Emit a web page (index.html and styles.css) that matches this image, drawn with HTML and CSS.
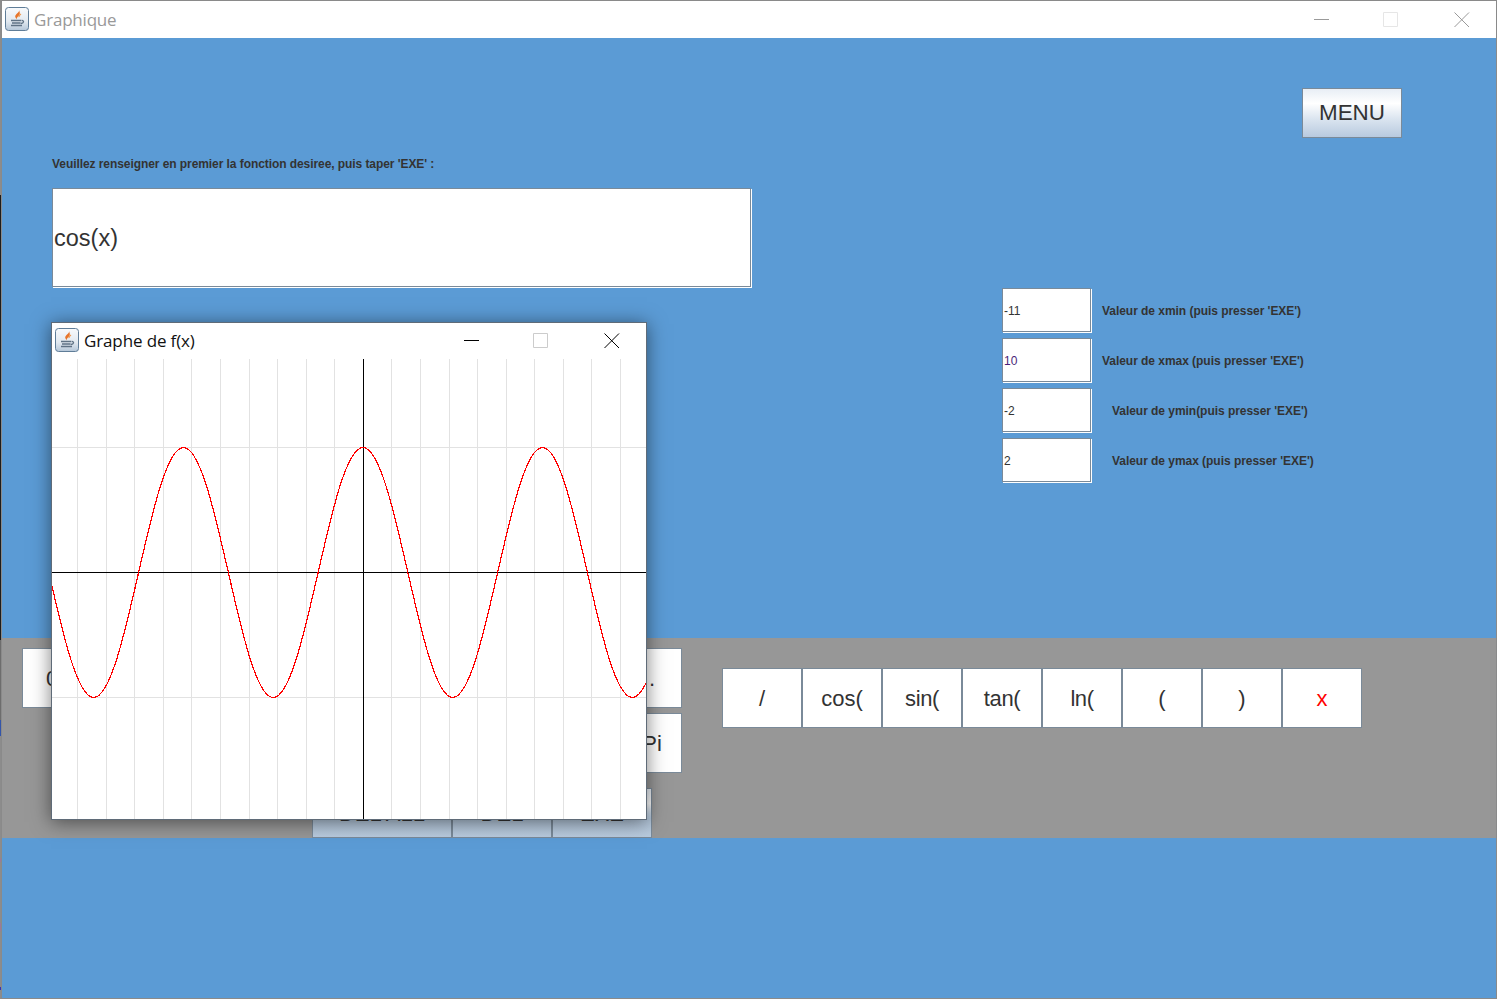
FILE: index.html
```html
<!DOCTYPE html>
<html lang="fr">
<head>
<meta charset="utf-8">
<title>Graphique</title>
<link rel="stylesheet" href="styles.css">
</head>
<body>
<div class="frame">
  <header class="titlebar">
    <svg class="java-icon" viewBox="0 0 24 24"><defs><linearGradient id="g1" x1="0" y1="0" x2="0" y2="1"><stop offset="0" stop-color="#f8fafc"/><stop offset=".6" stop-color="#e2e9f0"/><stop offset="1" stop-color="#b4c6d8"/></linearGradient></defs><rect x=".5" y=".5" width="23" height="23" rx="3" fill="url(#g1)" stroke="#5f7d98"/><path d="M14 3c.8 2.500-4 4.200-3.800 6.600.1 1 1 1.800 1.500 2.900.1-1.700.6-2.500 1.900-3.500 1.300-1 1.800-2.800.4-6z" fill="#e8742a"/><path d="M16 7c-1.500 1-2.300 1.800-2 3.200" fill="none" stroke="#ef9c55" stroke-width="1.200"/><path d="M6 13.500h10.500M7 16h8.500M6 18.500h11M17 13.500c2.200 0 2.200 2.500-1.200 3" fill="none" stroke="#5f7285" stroke-width="1.300"/></svg>
    <span class="title-text muted">Graphique</span>
    <div class="controls">
      <svg class="ctl" viewBox="0 0 16 16"><path d="M0 7.500H15" stroke="#9a9a9a"/></svg>
      <svg class="ctl" viewBox="0 0 16 16"><path d="M.5 .5H14.500V14.500H.5Z" fill="none" stroke="#e6e6e6"/></svg>
      <svg class="ctl ctl-close" viewBox="0 0 16 16"><path d="M.5 .5L15 15M15 .5L.5 15" stroke="#999" fill="none"/></svg>
    </div>
  </header>

  <section class="panel-top">
    <div class="col-left">
      <p class="label top-label">Veuillez renseigner en premier la fonction desiree, puis taper 'EXE' :</p>
      <div class="field big-field">cos(x)</div>
    </div>
    <div class="col-right">
      <button class="btn menu gloss">MENU</button>
      <div class="params">
        <div class="param"><div class="field small-field">-11</div><span class="label gap10">Valeur de xmin (puis presser 'EXE')</span></div>
        <div class="param"><div class="field small-field purple">10</div><span class="label gap10">Valeur de xmax (puis presser 'EXE')</span></div>
        <div class="param"><div class="field small-field">-2</div><span class="label gap20">Valeur de ymin(puis presser 'EXE')</span></div>
        <div class="param"><div class="field small-field">2</div><span class="label gap20">Valeur de ymax (puis presser 'EXE')</span></div>
      </div>
    </div>
  </section>

  <section class="panel-mid">
    <div class="keys-left">
      <div class="row digits">
        <button class="btn key">0</button><button class="btn key">1</button><button class="btn key">2</button><button class="btn key">3</button><button class="btn key">4</button><button class="btn key">5</button><button class="btn key">6</button><button class="btn key">7</button><button class="btn key">8</button><button class="btn key">9</button><button class="btn key">.</button>
      </div>
      <div class="row row-pi"><button class="btn key">Pi</button></div>
      <div class="row row-actions">
        <button class="btn action wide">DEL ALL</button><button class="btn action">DEL</button><button class="btn action">EXE</button>
      </div>
    </div>
    <div class="row functions">
      <button class="btn fn">/</button><button class="btn fn">cos(</button><button class="btn fn tight">sin(</button><button class="btn fn tight">tan(</button><button class="btn fn tight">ln(</button><button class="btn fn">(</button><button class="btn fn">)</button><button class="btn fn red">x</button>
    </div>
  </section>

  <section class="panel-bottom"></section>

  <div class="graph-window">
    <header class="graph-title">
      <svg class="java-icon" viewBox="0 0 24 24"><rect x=".5" y=".5" width="23" height="23" rx="3" fill="url(#g1)" stroke="#5f7d98"/><path d="M14 3c.8 2.500-4 4.200-3.800 6.600.1 1 1 1.800 1.500 2.900.1-1.700.6-2.500 1.900-3.500 1.300-1 1.800-2.800.4-6z" fill="#e8742a"/><path d="M16 7c-1.500 1-2.300 1.800-2 3.200" fill="none" stroke="#ef9c55" stroke-width="1.200"/><path d="M6 13.500h10.500M7 16h8.500M6 18.500h11M17 13.500c2.200 0 2.200 2.500-1.200 3" fill="none" stroke="#5f7285" stroke-width="1.300"/></svg>
      <span class="title-text graph-text">Graphe de f(x)</span>
      <div class="controls">
        <svg class="ctl" viewBox="0 0 16 16"><path d="M0 7.500H15" stroke="#000"/></svg>
        <svg class="ctl" viewBox="0 0 16 16"><path d="M.5 .5H14.500V14.500H.5Z" fill="none" stroke="#ccc"/></svg>
        <svg class="ctl ctl-close" viewBox="0 0 16 16"><path d="M.5 .5L15 15M15 .5L.5 15" stroke="#000" fill="none"/></svg>
      </div>
    </header>
    <svg class="plot" viewBox="0 0 594 460" width="594" height="460">
      <path class="grid" d="M25.500 0V460M54.500 0V460M82.500 0V460M111.500 0V460M139.500 0V460M168.500 0V460M197.500 0V460M225.500 0V460M254.500 0V460M282.500 0V460M339.500 0V460M368.500 0V460M397.500 0V460M425.500 0V460M454.500 0V460M482.500 0V460M511.500 0V460M539.500 0V460M568.500 0V460M0 88.500H594M0 338.500H594"/>
      <path class="axis" d="M311.500 0V460M0 213.500H594"/>
      <path class="curve" d="M-48.040 88.500c32.690 0 57.070 250 89.760 250c32.690 0 57.070 -250 89.760 -250c32.690 0 57.070 250 89.760 250c32.690 0 57.070 -250 89.760 -250c32.690 0 57.070 250 89.760 250c32.690 0 57.070 -250 89.760 -250c32.690 0 57.070 250 89.760 250c32.690 0 57.070 -250 89.760 -250"/>
    </svg>
  </div>
</div>
</body>
</html>
```
FILE: styles.css
```css
* { box-sizing: border-box; }
html, body { margin: 0; padding: 0; height: 100%; overflow: hidden; }
body {
  background: linear-gradient(180deg, #8c8c8c 0 195px, #1c1c1c 195px 640px, #6d6d6d 640px 720px, #3355aa 720px 736px, #8c8c8c 736px 858px, #9a7a9a 858px 862px, #8c8c8c 862px 923px, #9a7a9a 923px 931px, #8c8c8c 931px 987px, #3333bb 987px 990px, #8c8c8c 990px);
  padding-left: 1px;
  font-family: "Liberation Sans", Arial, sans-serif;
}

.frame {
  position: relative;
  width: 1496px;
  height: 999px;
  border: 1px solid #8a8a8a;
  display: flex;
  flex-direction: column;
}

.titlebar {
  height: 37px;
  flex: none;
  background: #fff;
  display: flex;
  align-items: center;
  padding: 0 0 1px 3px;
}
.java-icon { width: 24px; height: 24px; flex: none; }
.title-text {
  font-family: "Open Sans", "Noto Sans", sans-serif;
  font-size: 17px;
  margin-left: 5px;
  color: #111;
  letter-spacing: -.2px;
}
.muted { color: #999; }
.graph-text { letter-spacing: -.13px; }

.controls { margin-left: auto; margin-top: 1px; display: flex; gap: 53px; padding-right: 26px; }
.graph-title .controls { margin-top: 2px; }
.ctl { width: 16px; height: 16px; display: block; }
.ctl-close { margin-left: 2px; }

.panel-top {
  height: 600px;
  flex: none;
  background: #5b9bd5;
  display: flex;
}
.col-left { width: 700px; margin-left: 50px; padding-top: 119px; }
.col-right { margin-left: 250px; padding-top: 50px; flex: 1; }

.label { font-size: 12px; font-weight: 700; color: #333; line-height: 14px; margin: 0; letter-spacing: -.04px; padding-top: 2px; }
.top-label { margin-bottom: 17px; letter-spacing: -.07px; padding-top: 0; }
.gap10 { margin-left: 11px; }
.gap20 { margin-left: 21px; }

.field {
  background: #fff;
  border: 1px solid #7a8a99;
  box-shadow: 1px 1px 0 #fff;
  color: #333;
  display: flex;
  align-items: center;
  padding: 2px 0 0 1px;
}
.big-field { width: 699px; height: 99px; font-size: 23.500px; }
.small-field { width: 89px; height: 44px; font-size: 12px; flex: none; }
.purple { color: #4a1f78; }

.params { margin-top: 150px; display: flex; flex-direction: column; gap: 6px; }
.param { display: flex; align-items: center; height: 44px; }

.btn {
  font-family: "Liberation Sans", Arial, sans-serif;
  font-size: 22px;
  color: #333;
  background: #fff;
  border: 1px solid #7a8a99;
  padding: 2px 0 0;
  display: block;
  flex: none;
}
.gloss { background: linear-gradient(180deg, #e8eef5 0%, #ffffff 30%, #dbe5f0 62%, #b8cadf 100%); padding-top: 0; font-size: 22.400px; }
.menu { width: 100px; height: 50px; margin-left: 300px; }

.panel-mid {
  height: 200px;
  flex: none;
  background: #979797;
  display: flex;
  padding: 10px 0 0 20px;
}
.keys-left { width: 660px; display: flex; flex-direction: column; }
.row { display: flex; }
.key { width: 60px; height: 60px; }
.row-pi { margin-top: 5px; justify-content: flex-end; }
.row-actions { margin-top: 15px; margin-left: 290px; }
.action { width: 100px; height: 50px; background: linear-gradient(180deg, #e8eef5 0%, #ffffff 30%, #c8d6e5 50%, #b2c5d9 62%, #b9cbde 100%); }
.wide { width: 140px; }
.functions { margin: 20px 0 0 40px; align-self: flex-start; }
.fn { width: 80px; height: 60px; }
.tight { letter-spacing: -.4px; }
.red { color: #f00; }

.panel-bottom { flex: 1; background: #5b9bd5; }

.graph-window {
  position: absolute;
  left: 49px;
  top: 321px;
  width: 596px;
  height: 498px;
  background: #fff;
  border: 1px solid #5f6b78;
  box-shadow: 0 2px 18px rgba(0, 0, 0, .5);
  display: flex;
  flex-direction: column;
}
.graph-title { height: 36px; display: flex; align-items: center; padding: 0 0 2px 3px; flex: none; }
.plot { display: block; flex: none; overflow: hidden; }
.grid { stroke: #e2e2e2; stroke-width: 1; fill: none; shape-rendering: crispEdges; }
.axis { stroke: #000; stroke-width: 1; fill: none; shape-rendering: crispEdges; }
.curve { stroke: #f00; stroke-width: 1.200; fill: none; shape-rendering: crispEdges; }
```
